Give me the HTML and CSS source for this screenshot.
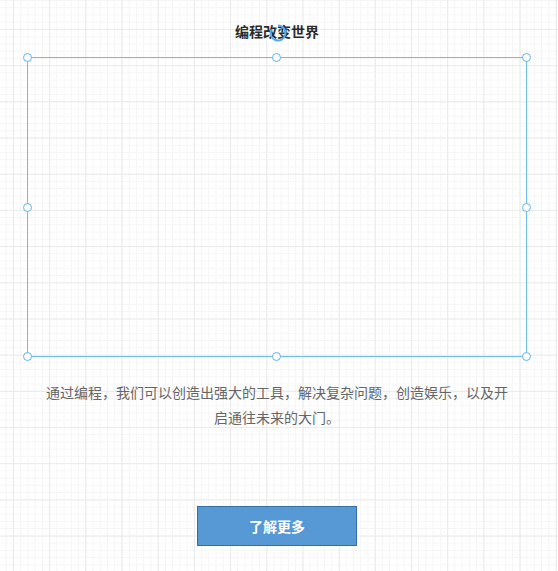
FILE: index.html
```html
<!DOCTYPE html>
<html lang="zh">
<head>
<meta charset="utf-8">
<link rel="stylesheet" href="styles.css">
</head>
<body>
<div class="page">
  <div class="title-wrap">
    <h1 class="title">编程改变世界</h1>
    <svg class="rotate" width="20" height="20" viewBox="0 0 20 20"><path d="M10 2.5 A7.5 7.5 0 1 1 3.5 6.2" fill="none" stroke="#4fadee" stroke-width="2"/></svg>
  </div>
  <div class="frame">
    <span class="h tl"></span><span class="h tm"></span><span class="h tr"></span>
    <span class="h ml"></span><span class="h mr"></span>
    <span class="h bl"></span><span class="h bm"></span><span class="h br"></span>
  </div>
  <p class="desc">通过编程，我们可以创造出强大的工具，解决复杂问题，创造娱乐，以及开启通往未来的大门。</p>
  <button class="btn">了解更多</button>
</div>
</body>
</html>
```
FILE: styles.css
```css
html, body {
  margin: 0;
  padding: 0;
}
body {
  width: 558px;
  height: 571px;
  overflow: hidden;
  background-color: #ffffff;
  background-image:
    linear-gradient(to right, #eaeaea 1px, transparent 1px),
    linear-gradient(to bottom, #eaeaea 1px, transparent 1px),
    linear-gradient(to right, #f5f5f5 1px, transparent 1px),
    linear-gradient(to bottom, #f5f5f5 1px, transparent 1px);
  background-size: 36.2px 36.2px, 36.2px 36.2px, 7.24px 7.24px, 7.24px 7.24px;
  background-position: 13px 0, 0 29px, 13px 0, 0 29px;
  font-family: "Noto Sans CJK SC", "Noto Sans", sans-serif;
}
.page {
  display: flex;
  flex-direction: column;
  align-items: flex-start;
}
.title-wrap {
  position: relative;
  padding-top: 22px;
  margin-left: 27px;
  width: 500px;
}
.title {
  margin: 0;
  font-size: 14px;
  line-height: 18px;
  font-weight: 700;
  color: #2b2b2b;
  text-align: center;
}
.rotate {
  position: absolute;
  left: 241px;
  top: 23px;
}
.frame {
  position: relative;
  margin-top: 17px;
  margin-left: 27px;
  width: 498px;
  height: 298px;
  border: 1px solid #6dbdf3;
}
.h {
  position: absolute;
  width: 7px;
  height: 7px;
  border: 1px solid #5fb4ee;
  border-radius: 50%;
  background: #fff;
}
.tl { left: -5px; top: -5px; }
.tm { left: 244px; top: -5px; }
.tr { right: -5px; top: -5px; }
.ml { left: -5px; top: 145px; }
.mr { right: -5px; top: 145px; }
.bl { left: -5px; bottom: -5px; }
.bm { left: 244px; bottom: -5px; }
.br { right: -5px; bottom: -5px; }
.desc {
  margin: 23px 0 0 42px;
  width: 470px;
  font-size: 14px;
  line-height: 25px;
  color: #666;
  text-align: center;
}
.btn {
  margin: 76px 0 0 197px;
  width: 160px;
  height: 40px;
  background: #5799d4;
  border: 1px solid #336ea8;
  color: #fff;
  font-family: inherit;
  font-size: 14px;
  font-weight: 700;
  padding: 0;
}
```
